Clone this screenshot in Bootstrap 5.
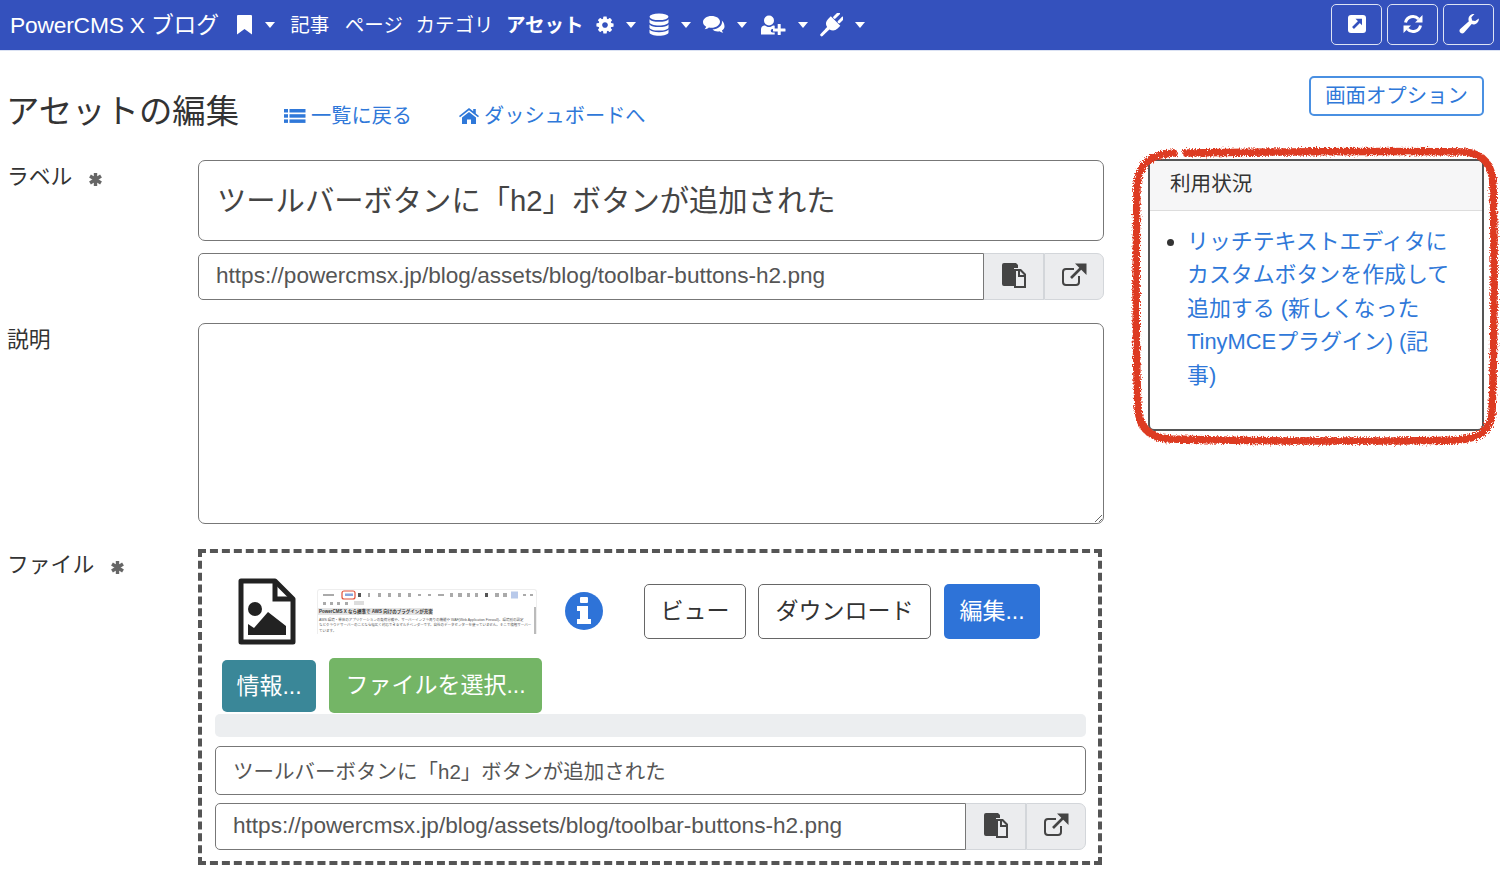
<!DOCTYPE html>
<html lang="ja">
<head>
<meta charset="utf-8">
<title>アセットの編集</title>
<link href="https://cdn.jsdelivr.net/npm/bootstrap@5.3.0/dist/css/bootstrap.min.css" rel="stylesheet">
<style>
html,body{height:875px;overflow:hidden}
body{font-family:"Liberation Sans","Noto Sans CJK JP",sans-serif;font-size:21.8px;color:#333;background:#fff}
.topbar{height:51px;background:#3451bd;border-bottom:1px solid #dbe2f3;padding:0 6px 0 10px;flex-wrap:nowrap;align-items:center;justify-content:flex-start}
.topbar .navbar-brand{color:#fff;font-size:22.8px;padding:0;margin:0 17px 0 0;letter-spacing:-.2px}
.topbar .nav-link{color:#fff;padding:0;font-size:19.5px;line-height:26px;display:flex;align-items:center}
.topbar .dropdown-toggle::after{margin-left:12px;border-top-width:6px;border-left-width:5.5px;border-right-width:5.5px;vertical-align:0}
.topbar .mainnav{gap:12.5px;flex-direction:row;align-items:center}
.topbar .nav-link.cur{font-weight:700}
.topbar .nav-link.firsttext{margin-left:3px;margin-right:3px}
.topbtns{margin-left:auto;gap:5px;margin-right:0;margin-top:-2px}
.topbtn{width:51px;height:41px;padding:0;border:1.5px solid #dde3f4;border-radius:5px;display:flex;align-items:center;justify-content:center;background:transparent}
.wrap{padding-left:7px}
.leftcol{width:1097px}
.sidecol{width:336px;margin-left:44px}
.headrow{height:109px;align-items:center;padding-top:10px}
.pagetitle{font-size:33.4px;font-weight:400;margin:2px 45px 0 -1px;line-height:46px;color:#333}
.backlink{font-size:20.2px;color:#2f78d9;text-decoration:none;display:inline-flex;align-items:center;gap:5px;margin:12px 47px 0 0}
.fieldrow{display:flex}
.fieldlabel{width:191px;flex:none;font-size:21.8px;line-height:32px;color:#333;padding-top:1px;margin:0}
.reqmark{color:#666;margin-left:17px;display:inline-block;vertical-align:-1px;line-height:1}
.fieldbody{flex:1;min-width:0}
.form-control.txtbig{height:81px;font-size:29.3px;padding:0 18px 6px;border:1.5px solid #777;border-radius:7px;color:#444}
.urlgroup{height:47px;margin-top:12px}
.urlgroup .form-control{font-family:"Liberation Sans",sans-serif;font-size:22.6px;color:#555;border:1.5px solid #777;border-radius:5px 0 0 5px;padding:0 0 2px 17px;height:47px}
.addonbtn{width:60px;flex:none;background:#ebecee;border:1px solid #d3d6da;border-left:1px solid #d3d6da;color:#444;padding:0 0 3px;display:flex;align-items:center;justify-content:center;height:47px;margin-left:0!important}
.urlgroup .addonbtn:first-of-type{border-left:0}
.addonbtn:last-child{border-radius:0 7px 7px 0}
.form-control.notes{height:201px;border:1.5px solid #777;border-radius:7px;margin-top:23px;display:block}
.filebox{width:904px;height:316px;margin-top:25px;border:4px dashed #555;padding:26px 12px 0 13px}
.filerow1{height:64px;display:flex;align-items:center;padding-left:23px}
.thumbbox{width:220px;height:45px;margin-left:21px;overflow:hidden;border:1px solid #eee;border-bottom:0;border-radius:3px 3px 0 0;background:#fff;line-height:1;position:relative}
.thumbbar{display:block;width:218px;height:17px}
.thumbhead{font-size:4.5px;line-height:7px;font-weight:700;color:#333;margin:1px 0 0;padding:0 1px;background:#e4e4e4;white-space:nowrap;width:115px}
.thumbtext{font-size:3.5px;line-height:5.5px;color:#555;padding:3px 1px 0;white-space:nowrap}
.thumbscroll{position:absolute;right:0;top:17px;width:2px;height:28px;background:#bbb}
.bigbtn{font-size:23px;height:55px;padding:0;border-radius:5px;display:flex;align-items:center;justify-content:center;line-height:1}
.btn-plain{border:1.5px solid #666;background:#fff;color:#333}
.btn-edit{background:#2e73d8;border:0;color:#fff;width:96px;margin-left:13px}
.btn-view{width:102px;margin-left:41px}
.btn-dl{width:173px;margin-left:12px}
.infoicon{margin-left:28px}
.filerow2{display:flex;align-items:center;padding-left:7px;margin-top:15px;height:55px}
.btn-info2{background:#3a8798;border:0;color:#fff;width:94px;height:52px;margin-top:1px}
.btn-pick{background:#74b566;border:0;color:#fff;width:213px;margin-left:13px}
.progress.emptybar{height:23px;background:#eceef0;border-radius:5px;margin-top:1px}
.form-control.subtitle{height:49px;margin-top:9px;border:1.5px solid #777;border-radius:5px;font-size:20.5px;color:#555;padding:0 17px 2px}
.filebox .urlgroup{margin-top:8px}
.optbtn{display:block;width:175px;height:40px;margin:25px 0 0 auto;border:2px solid #4a90e2;border-radius:5px;background:#fff;color:#2f78d9;font-size:20.4px;padding:0;line-height:1}
.usagewrap{position:relative;margin-top:43px}
.usagecard{height:272px;border:2px solid #555;border-radius:6px;color:#333}
.usagecard .card-header{height:50px;background:#f6f6f7;border-bottom:1px solid #ddd;font-size:20.6px;padding:0 20px;line-height:46px}
.usagelist{margin:14px 0 0;padding:0 0 0 37px;list-style:disc;font-size:21.9px;line-height:33.4px}
.usagelist a{color:#2f78d9;text-decoration:none}
.redmark{position:absolute;left:-16px;top:-13px;width:368px;height:302px;overflow:visible;pointer-events:none}
</style>
</head>
<body>
<nav class="navbar topbar">
  <a class="navbar-brand" href="#">PowerCMS X ブログ</a>
  <div class="navbar-nav mainnav">
    <a class="nav-link dropdown-toggle" href="#"><svg width="17" height="20" viewBox="0 0 17 20"><path fill="#fff" d="M2 0h13a1 1 0 0 1 1 1v18.500l-7.500-5.500L1 19.500V1a1 1 0 0 1 1-1z"/></svg></a>
    <a class="nav-link firsttext" href="#">記事</a>
    <a class="nav-link" href="#">ページ</a>
    <a class="nav-link" href="#">カテゴリ</a>
    <a class="nav-link cur" href="#">アセット</a>
    <a class="nav-link dropdown-toggle" href="#"><svg width="18" height="20" viewBox="0 0 1536 1792"><path fill="#fff" fill-rule="evenodd" d="M1024 896q0-106-75-181t-181-75-181 75-75 181 75 181 181 75 181-75 75-181zm512-109v222q0 12-8 23t-20 13l-185 28q-19 54-39 91 35 50 107 138 10 12 10 25t-9 23q-27 37-99 108t-94 71q-12 0-26-9l-138-108q-44 23-91 38-16 136-29 186-7 28-36 28h-222q-14 0-24.5-8.500t-11.500-21.500l-28-184q-49-16-90-37l-141 107q-10 9-25 9-14 0-25-11-126-114-165-168-7-10-7-23 0-12 8-23 15-21 51-66.500t54-70.500q-27-50-41-99l-183-27q-13-2-21-12.500t-8-23.500v-222q0-12 8-23t19-13l186-28q14-46 39-92-40-57-107-138-10-12-10-24 0-10 9-23 26-36 98.500-107.500t94.500-71.500q13 0 26 10l138 107q44-23 91-38 16-136 29-186 7-28 36-28h222q14 0 24.500 8.500t11.500 21.500l28 184q49 16 90 37l142-107q9-9 24-9 13 0 25 10 129 119 165 170 7 8 7 22 0 12-8 23-15 21-51 66.500t-54 70.500q26 50 41 98l183 28q13 2 21 12.500t8 23.500z"/></svg></a>
    <a class="nav-link dropdown-toggle" href="#"><svg width="20" height="24" viewBox="0 0 20 24"><g fill="#fff"><ellipse cx="10" cy="3.800" rx="9.500" ry="3.300"/><path d="M.5 6.200C1.800 8 5.500 8.800 10 8.800s8.200-.8 9.500-2.600v3c0 1.800-4.300 3.200-9.500 3.200S.5 11 .5 9.200z"/><path d="M.5 11.400c1.300 1.800 5 2.600 9.500 2.600s8.200-.8 9.500-2.600v3c0 1.800-4.300 3.200-9.500 3.200S.5 16.200.5 14.400z"/><path d="M.5 16.600c1.300 1.800 5 2.600 9.500 2.600s8.200-.8 9.500-2.600v3c0 1.800-4.300 3.200-9.500 3.200S.5 21.400.5 19.600z"/></g></svg></a>
    <a class="nav-link dropdown-toggle" href="#"><svg width="22" height="20" viewBox="0 0 22 20"><g fill="#fff"><path d="M8.500 1C3.800 1 0 3.700 0 7c0 1.900 1.300 3.600 3.200 4.700-.3 1-.9 1.800-1.600 2.500 1.700-.2 3.200-.9 4.300-1.800.8.200 1.700.3 2.600.3 4.700 0 8.500-2.700 8.500-6S13.200 1 8.500 1z"/><path d="M18.800 5.500c.1.500.2 1 .2 1.500 0 4-4 7-9.500 7.500 1.200 1.200 3.100 1.900 5.200 1.900.6 0 1.200-.1 1.800-.2 1 .9 2.300 1.400 3.800 1.600-.6-.6-1.100-1.400-1.400-2.300 1.600-1 2.600-2.500 2.600-4.100 0-2.300-1.100-4.600-2.700-5.900z"/></g></svg></a>
    <a class="nav-link dropdown-toggle" href="#"><svg width="26" height="20" viewBox="0 0 26 20"><g fill="#fff"><circle cx="9" cy="5.500" r="5"/><path d="M1 19.500v-5c0-2.500 1.800-4 4-4 1 .9 2.400 1.500 4 1.500s3-.6 4-1.500c.6 0 1.200.1 1.700.3v3.200h-2.200a1.800 1.800 0 0 0 0 3.600h2.200v1.900z"/><rect x="13" y="13.500" width="12.500" height="3" rx=".5"/><rect x="17.700" y="9" width="3" height="11" rx=".5"/></g></svg></a>
    <a class="nav-link dropdown-toggle" href="#"><svg width="23" height="24" viewBox="0 0 24 24"><g fill="#fff" transform="rotate(45 12 12)"><rect x="7.200" y="-3" width="3" height="8.500" rx="1.200"/><rect x="13.800" y="-3" width="3" height="8.500" rx="1.200"/><path d="M5 6h14v4a7 7 0 0 1-5.300 6.800V20a1.700 1.700 0 0 1-1.700 1.700A1.700 1.700 0 0 1 10.300 20v-3.200A7 7 0 0 1 5 10z"/><rect x="10.500" y="20" width="3" height="8" rx="1.400"/></g></svg></a>
  </div>
  <div class="d-flex topbtns">
    <button class="topbtn" type="button" aria-label="ビュー"><svg width="18" height="18" viewBox="0 0 18 18"><rect width="18" height="18" rx="3" fill="#fff"/><path fill="none" stroke="#3451bd" stroke-width="2.600" d="M5 13 12 6"/><path fill="#3451bd" d="M7.500 3.800H14v6.500z"/></svg></button>
    <button class="topbtn" type="button" aria-label="更新"><svg width="20" height="20" viewBox="0 0 20 20"><g fill="none" stroke="#fff" stroke-width="3"><path d="M2.500 8.500A7.500 7.500 0 0 1 15.500 5"/><path d="M17.500 11.500A7.500 7.500 0 0 1 4.500 15"/></g><path fill="#fff" d="M19.500 1v7.500H12zM.5 19v-7.500H8z"/></svg></button>
    <button class="topbtn" type="button" aria-label="設定"><svg width="20" height="20" viewBox="0 0 20 20"><path fill="#fff" d="M19.800 4.500c.3 2.900-1.700 5.700-4.700 6-.9.100-1.700 0-2.400-.4L5 18.800c-1 1-2.500 1-3.500 0l-.3-.3c-1-1-1-2.500 0-3.500l8.700-7.700c-.4-.8-.5-1.600-.4-2.500.3-2.900 3-5 6-4.700l-3.100 3.200.7 3.100 3.100.7z"/></svg></button>
  </div>
</nav>

<div class="wrap d-flex">
  <main class="leftcol">
    <div class="d-flex headrow">
      <h1 class="pagetitle">アセットの編集</h1>
      <a class="backlink" href="#"><svg width="22" height="16" viewBox="0 0 22 16"><g fill="#2f78d9"><rect y="1" width="4" height="3.500"/><rect y="6.200" width="4" height="3.500"/><rect y="11.400" width="4" height="3.500"/><rect x="5.500" y="1" width="16" height="3.500"/><rect x="5.500" y="6.200" width="16" height="3.500"/><rect x="5.500" y="11.400" width="16" height="3.500"/></g></svg>一覧に戻る</a>
      <a class="backlink" href="#"><svg width="20" height="16" viewBox="0 0 20 16"><path fill="#2f78d9" d="M10 0 0 8l1 1.300L10 2.300l9 7L20 8l-3.200-2.600V1h-2.600v2.300zM3 9.500V16h5v-4.500h4V16h5V9.500L10 4z"/></svg>ダッシュボードへ</a>
    </div>

    <div class="fieldrow">
      <label class="fieldlabel">ラベル<span class="reqmark"><svg width="13" height="13" viewBox="0 0 13 13"><g stroke="#666" stroke-width="3.400"><path d="M6.500 0v13M1 3l11 7M12 3 1 10"/></g></svg></span></label>
      <div class="fieldbody">
        <input class="form-control txtbig" type="text" value="ツールバーボタンに「h2」ボタンが追加された">
        <div class="input-group urlgroup">
          <input class="form-control" type="text" value="https://powercmsx.jp/blog/assets/blog/toolbar-buttons-h2.png">
          <button class="addonbtn" type="button" aria-label="コピー"><svg width="26" height="26" viewBox="0 0 26 26"><path fill="#444" d="M3 1h12l2 2v3h-4v18H3a2 2 0 0 1-2-2V3a2 2 0 0 1 2-2z"/><path fill="#444" fill-rule="evenodd" d="M13 7h7l5 5v14H13zM19 9v4h4l-4-4zM15 9v15h8V15h-6V9z"/></svg></button>
          <button class="addonbtn" type="button" aria-label="開く"><svg width="26" height="24" viewBox="0 0 26 24"><path fill="none" stroke="#444" stroke-width="2" d="M18 13v6a3 3 0 0 1-3 3H5a3 3 0 0 1-3-3V9a3 3 0 0 1 3-3h8"/><path fill="none" stroke="#444" stroke-width="2.600" d="m10 15 11-11"/><path fill="#444" d="M14 .5h11.500V12z"/></svg></button>
        </div>
      </div>
    </div>

    <div class="fieldrow">
      <label class="fieldlabel" style="margin-top:23px">説明</label>
      <div class="fieldbody"><textarea class="form-control notes" aria-label="説明"></textarea></div>
    </div>

    <div class="fieldrow">
      <label class="fieldlabel" style="margin-top:24px">ファイル<span class="reqmark"><svg width="13" height="13" viewBox="0 0 13 13"><g stroke="#666" stroke-width="3.400"><path d="M6.500 0v13M1 3l11 7M12 3 1 10"/></g></svg></span></label>
      <div class="fieldbody">
        <div class="filebox">
          <div class="filerow1">
            <svg width="58" height="67" viewBox="0 0 58 67"><path fill="none" stroke="#222" stroke-width="5" stroke-linejoin="round" d="M3 3h34l18 18v43H3z"/><path fill="none" stroke="#222" stroke-width="5" d="M37 3v18h18"/><circle cx="17" cy="31" r="7" fill="#222"/><path fill="#222" d="M10 57V46l6 4 14-16 18 14v9z"/></svg>
            <div class="thumbbox">
              <svg class="thumbbar" viewBox="0 0 218 17"><g fill="#aaa"><rect x="5" y="4" width="11" height="2"/><rect x="27" y="3.500" width="8" height="2.500" fill="#88a6dc"/><rect x="40" y="3" width="3" height="4" fill="#555"/><rect x="50" y="3" width="2" height="4"/><rect x="60" y="3" width="3" height="4"/><rect x="70" y="3" width="3" height="4"/><rect x="80" y="3" width="3" height="4"/><rect x="90" y="3" width="3" height="4"/><rect x="100" y="4" width="3" height="2"/><rect x="110" y="4" width="3" height="2"/><rect x="120" y="4" width="6" height="2"/><rect x="132" y="3" width="3" height="4"/><rect x="140" y="3" width="4" height="4"/><rect x="149" y="3" width="3" height="4"/><rect x="157" y="3" width="3" height="4"/><rect x="167" y="3" width="3" height="4" fill="#555"/><rect x="177" y="3" width="4" height="4"/><rect x="185" y="3" width="4" height="4"/><rect x="193" y="1.500" width="7" height="7" fill="#b8c9ea"/><rect x="205" y="4" width="3" height="2"/><rect x="212" y="4" width="3" height="2"/><rect x="5" y="12" width="3" height="3"/><rect x="12" y="12" width="3" height="3"/><rect x="19" y="12" width="3" height="3"/><rect x="27" y="12" width="3" height="3"/><rect x="36" y="11" width="10" height="4" fill="#ddd"/></g><rect x="24" y="1" width="13" height="8" rx="2" fill="none" stroke="#e0503a" stroke-width="1.200"/></svg>
              <div class="thumbhead">PowerCMS X なら標準で AWS 向けのプラグインが充実</div>
              <div class="thumbtext">AWS 環境・単体のアプリケーションの負荷分散や、サーバーインフラ周りの機能や WAF(Web Application Firewall)、環境別の設定<br>などクラウドサーバーのことなら幅広く対応できるマルチベンダーです。自社のデータセンターを使っていません。そこで積極サーバー<br>ています。</div>
              <div class="thumbscroll"></div>
            </div>
            <svg class="infoicon" width="38" height="38" viewBox="0 0 38 38"><circle cx="19" cy="19" r="19" fill="#2e73d8"/><g fill="#fff"><rect x="15" y="5" width="8" height="6" rx="1"/><path d="M12 14h11v13h3v5H12v-5h3v-8h-3z"/></g></svg>
            <button class="btn bigbtn btn-plain btn-view" type="button">ビュー</button>
            <button class="btn bigbtn btn-plain btn-dl" type="button">ダウンロード</button>
            <button class="btn bigbtn btn-edit" type="button">編集...</button>
          </div>
          <div class="filerow2">
            <button class="btn bigbtn btn-info2" type="button">情報...</button>
            <button class="btn bigbtn btn-pick" type="button">ファイルを選択...</button>
          </div>
          <div class="progress emptybar"></div>
          <input class="form-control subtitle" type="text" value="ツールバーボタンに「h2」ボタンが追加された">
          <div class="input-group urlgroup">
            <input class="form-control" type="text" value="https://powercmsx.jp/blog/assets/blog/toolbar-buttons-h2.png">
            <button class="addonbtn" type="button" aria-label="コピー"><svg width="26" height="26" viewBox="0 0 26 26"><path fill="#444" d="M3 1h12l2 2v3h-4v18H3a2 2 0 0 1-2-2V3a2 2 0 0 1 2-2z"/><path fill="#444" fill-rule="evenodd" d="M13 7h7l5 5v14H13zM19 9v4h4l-4-4zM15 9v15h8V15h-6V9z"/></svg></button>
            <button class="addonbtn" type="button" aria-label="開く"><svg width="26" height="24" viewBox="0 0 26 24"><path fill="none" stroke="#444" stroke-width="2" d="M18 13v6a3 3 0 0 1-3 3H5a3 3 0 0 1-3-3V9a3 3 0 0 1 3-3h8"/><path fill="none" stroke="#444" stroke-width="2.600" d="m10 15 11-11"/><path fill="#444" d="M14 .5h11.500V12z"/></svg></button>
          </div>
        </div>
      </div>
    </div>
  </main>

  <aside class="sidecol">
    <button class="btn optbtn" type="button">画面オプション</button>
    <div class="usagewrap">
      <div class="card usagecard">
        <div class="card-header">利用状況</div>
        <ul class="usagelist">
          <li><a href="#">リッチテキストエディタに<br>カスタムボタンを作成して<br>追加する (新しくなった<br>TinyMCEプラグイン) (記<br>事)</a></li>
        </ul>
      </div>
      <svg class="redmark" viewBox="0 0 368 302" aria-hidden="true">
        <defs><filter id="rough" x="-5%" y="-5%" width="110%" height="110%"><feTurbulence type="fractalNoise" baseFrequency=".7" numOctaves="2" seed="4"/><feDisplacementMap in="SourceGraphic" scale="6"/></filter></defs>
        <path filter="url(#rough)" fill="none" stroke="#dd3a22" stroke-width="7.500" stroke-linecap="round" d="M54 7C110 6 250 5 332 6 352 7 361 20 361 40 363 110 362 210 360 268 358 286 345 293 325 294 240 296 110 295 38 293 18 292 7 282 6 262 3 190 4 110 5 40 6 18 18 8 42 7"/>
      </svg>
    </div>
  </aside>
</div>
<script src="https://cdn.jsdelivr.net/npm/bootstrap@5.3.0/dist/js/bootstrap.bundle.min.js"></script>
</body>
</html>
